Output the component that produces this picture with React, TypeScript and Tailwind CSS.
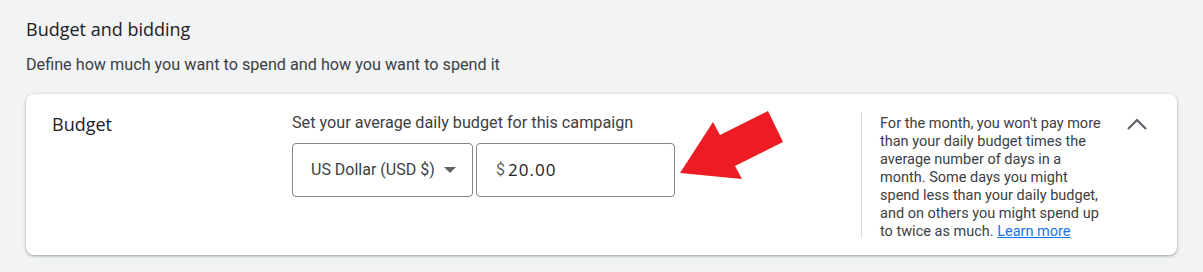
import React from "react";

const ChevronUp = () => (
  <svg width="24" height="24" viewBox="0 0 24 24" className="block">
    <path d="M3 16 L12 7 L21 16" fill="none" stroke="#5f6368" strokeWidth="2.2" />
  </svg>
);

const RedArrow = () => (
  // annotation drawn over the card
  <svg
    width="130"
    height="90"
    viewBox="670 100 130 90"
    className="absolute left-[670px] top-[100px] pointer-events-none"
  >
    <polygon
      points="680,173 713,122 720,135 768,111 783,142 735,166 742,179"
      fill="#ed1c24"
    />
  </svg>
);

export default function App() {
  return (
    <div className="relative w-[1203px] h-[272px] bg-[#f1f3f4] px-[26px] pt-[17px] font-['Roboto',sans-serif] overflow-hidden">
      <h2 className="text-[18px] leading-[24px] text-[#202124] font-['Open_Sans',sans-serif]">
        Budget and bidding
      </h2>
      <p className="mt-[14px] text-[16.2px] leading-[20px] text-[#3c4043]">
        Define how much you want to spend and how you want to spend it
      </p>

      <div className="mt-[19px] w-[1151px] h-[161px] bg-white rounded-[8px] shadow-[0_1px_2px_rgba(60,64,67,0.3),0_1px_3px_1px_rgba(60,64,67,0.15)] flex">
        {/* label */}
        <div className="w-[266px] pl-[26px] pt-[18px]">
          <span className="text-[18px] leading-[24px] text-[#202124] font-['Open_Sans',sans-serif]">
            Budget
          </span>
        </div>

        {/* inputs */}
        <div className="w-[569px] pt-[19px]">
          <div className="text-[16.2px] leading-[20px] text-[#3c4043]">
            Set your average daily budget for this campaign
          </div>
          <div className="mt-[10px] flex gap-[3px]">
            <div className="w-[181px] h-[54px] border border-[#80868b] rounded-[4px] flex items-center pl-[18px] pr-[16px] justify-between">
              <span className="text-[16px] text-[#3c4043]">US Dollar (USD $)</span>
              <span className="w-0 h-0 border-l-[6px] border-r-[6px] border-t-[6px] border-l-transparent border-r-transparent border-t-[#5f6368]" />
            </div>
            <div className="w-[199px] h-[54px] border border-[#80868b] rounded-[4px] flex items-center pl-[19px]">
              <span className="text-[16px] text-[#5f6368] mr-[3px]">$</span>
              <span className="text-[17px] tracking-[1px] text-[#202124] font-medium font-['Open_Sans',sans-serif]">
                20.00
              </span>
            </div>
          </div>
        </div>

        {/* help text */}
        <div className="mt-[18px] mb-[17px] border-l border-[#dadce0] pl-[18px] w-[245px]">
          <p className="w-[222px] pt-[3px] text-[14.5px] leading-[18px] text-[#3c4043]">
            For the month, you won't pay more than your daily budget times the
            average number of days in a month. Some days you might spend less
            than your daily budget, and on others you might spend up to twice as
            much.{" "}
            <a href="#" className="text-[#1a73e8] underline">
              Learn more
            </a>
          </p>
        </div>

        <div className="pt-[19px] pl-[19px]">
          <ChevronUp />
        </div>
      </div>

      <RedArrow />
    </div>
  );
}
